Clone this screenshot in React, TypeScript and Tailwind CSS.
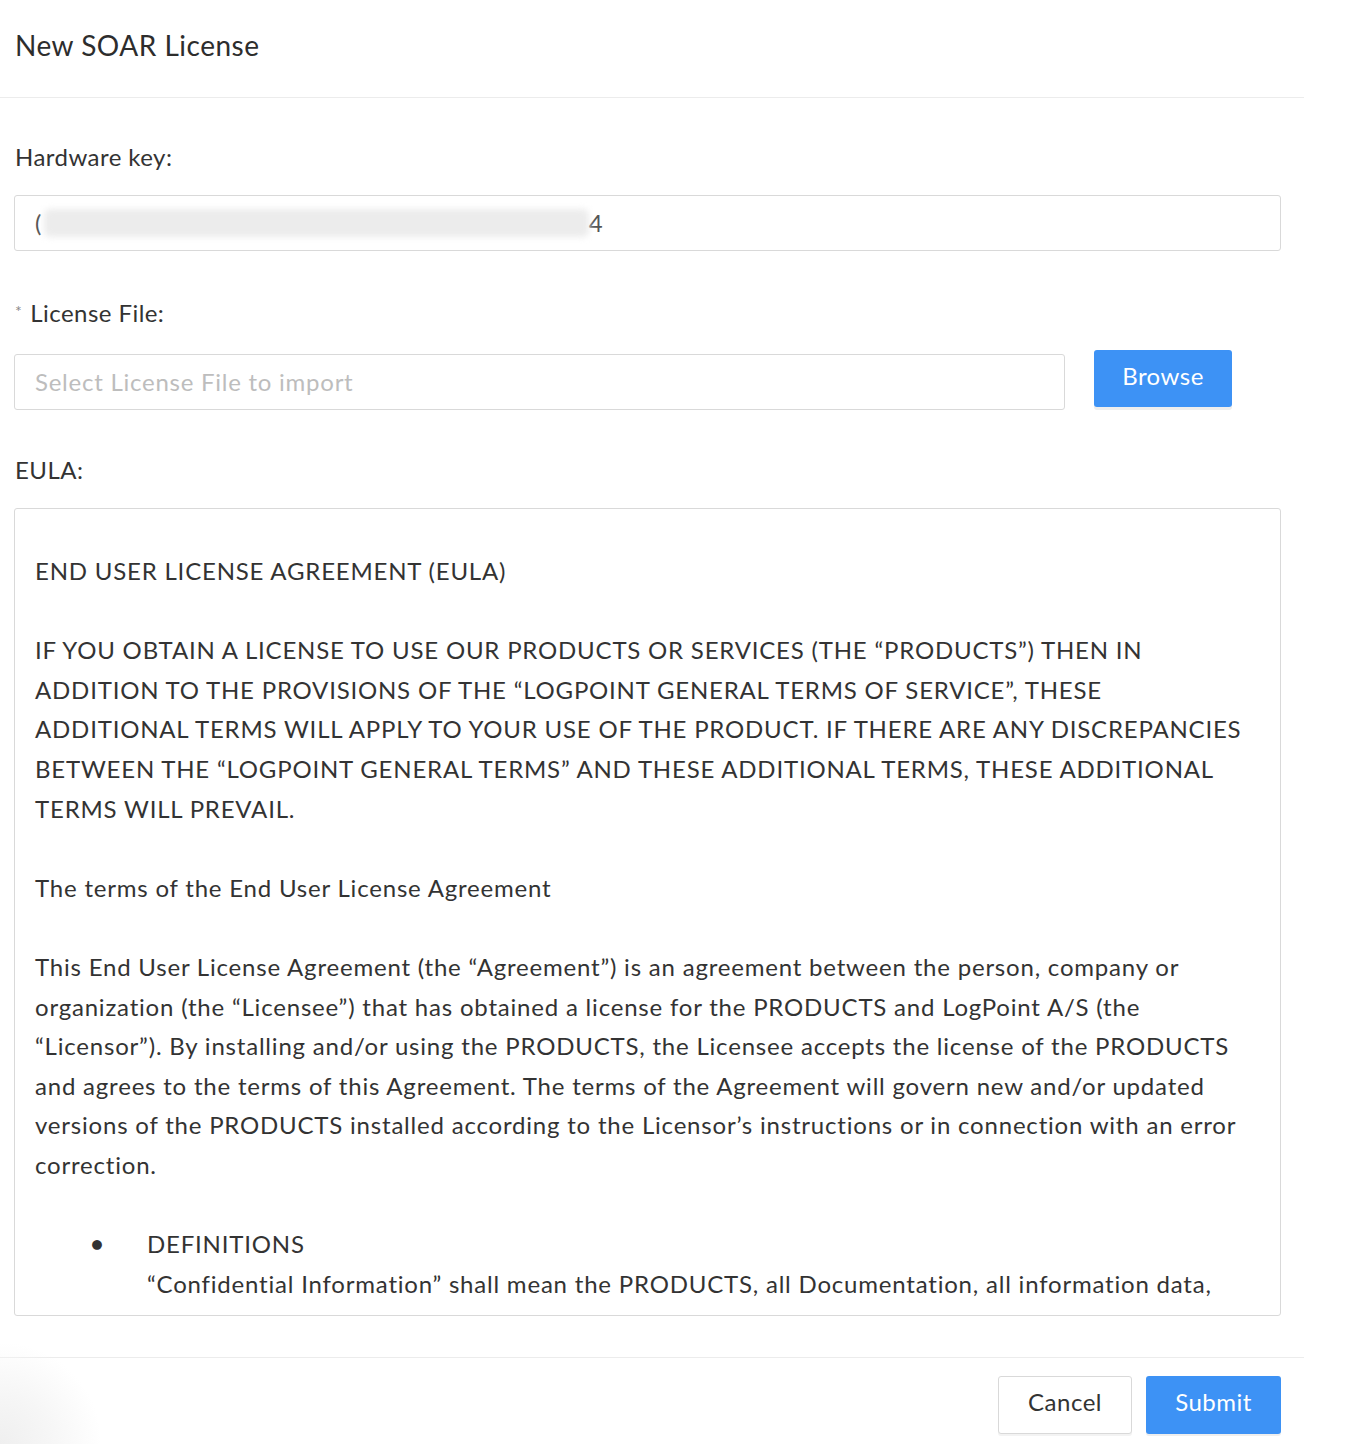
import React from "react";

const font = { fontFamily: "Lato, 'Open Sans', sans-serif" };

function Line({ children, className = "" }: { children: React.ReactNode; className?: string }) {
  return <div className={"whitespace-nowrap " + className}>{children}</div>;
}

export default function App() {
  return (
    <div className="relative w-[1356px] h-[1444px] bg-white text-[#333333] overflow-hidden" style={font}>
      <div className="w-[1304px] flex flex-col">
        {/* Header */}
        <div className="h-[98px] border-b border-[#ececec] px-[15px] pt-[26px]">
          <div className="text-[28px] leading-[38px] tracking-[0.5px] text-[#2d2d2d]">New SOAR License</div>
        </div>

        {/* Body */}
        <div className="pl-[14px] pr-[23px] flex flex-col text-[24px] tracking-[0.45px]">
          <div className="pt-[44px] pl-[1px] leading-[30px]">Hardware key:</div>
          <div className="mt-[23px] h-[56px] border border-[#d9d9d9] rounded-[3px] flex items-center pl-[20px]">
            <span className="text-[#555]">(</span>
            <span className="ml-[2px] h-[28px] w-[545px] bg-[#ececec] blur-[3px] rounded-[6px]"></span>
            <span className="text-[#555]">4</span>
          </div>

          <div className="mt-[47px] pl-[1px] flex items-center leading-[30px]">
            <span className="text-[16px] text-[#888] mr-[8px] mt-[-4px]">*</span>
            <span>License File:</span>
          </div>
          <div className="mt-[22px] flex items-start">
            <div className="mt-[4px] w-[1051px] h-[56px] border border-[#d9d9d9] rounded-[3px] flex items-center pl-[20px] text-[#bdbdbd] tracking-[0.75px]">
              Select License File to import
            </div>
            <button className="ml-[29px] w-[138px] h-[57px] rounded-[3px] bg-[#3d92f5] text-white tracking-[0.5px] shadow-[0_3px_0_#eeeeee] pb-[6px]">
              Browse
            </button>
          </div>

          <div className="mt-[45px] pl-[1px] leading-[30px]">EULA:</div>

          <div className="mt-[23px] h-[808px] border border-[#d9d9d9] rounded-[3px] overflow-hidden pl-[20px] pt-[42px] leading-[39.6px] tracking-[0.8px] text-[#333333]">
            <Line>END USER LICENSE AGREEMENT (EULA)</Line>
            <div className="h-[39.6px]" />
            <Line>IF YOU OBTAIN A LICENSE TO USE OUR PRODUCTS OR SERVICES (THE “PRODUCTS”) THEN IN</Line>
            <Line>ADDITION TO THE PROVISIONS OF THE “LOGPOINT GENERAL TERMS OF SERVICE”, THESE</Line>
            <Line>ADDITIONAL TERMS WILL APPLY TO YOUR USE OF THE PRODUCT. IF THERE ARE ANY DISCREPANCIES</Line>
            <Line>BETWEEN THE “LOGPOINT GENERAL TERMS” AND THESE ADDITIONAL TERMS, THESE ADDITIONAL</Line>
            <Line>TERMS WILL PREVAIL.</Line>
            <div className="h-[39.6px]" />
            <Line>The terms of the End User License Agreement</Line>
            <div className="h-[39.6px]" />
            <Line>This End User License Agreement (the “Agreement”) is an agreement between the person, company or</Line>
            <Line>organization (the “Licensee”) that has obtained a license for the PRODUCTS and LogPoint A/S (the</Line>
            <Line>“Licensor”). By installing and/or using the PRODUCTS, the Licensee accepts the license of the PRODUCTS</Line>
            <Line>and agrees to the terms of this Agreement. The terms of the Agreement will govern new and/or updated</Line>
            <Line>versions of the PRODUCTS installed according to the Licensor’s instructions or in connection with an error</Line>
            <Line>correction.</Line>
            <div className="h-[39.6px]" />
            <div className="flex items-center whitespace-nowrap">
              <span className="w-[112px] pl-[56px] text-[20px]">●</span>
              <span>DEFINITIONS</span>
            </div>
            <Line className="pl-[112px]">“Confidential Information” shall mean the PRODUCTS, all Documentation, all information data,</Line>
            <Line>the source code, program structures, know-how and the activities of LogPoint A/S and other proprietary info shall</Line>
          </div>
        </div>

        {/* Footer */}
        <div className="mt-[41px] border-t border-[#ececec] flex justify-end pr-[23px] pt-[18px] gap-[14px] text-[24px] tracking-[0.5px]">
          <button className="w-[134px] h-[58px] rounded-[3px] border border-[#d9d9d9] bg-white text-[#333333] pb-[6px] shadow-[0_2px_0_#f3f3f3]">
            Cancel
          </button>
          <button className="w-[135px] h-[58px] rounded-[3px] bg-[#3d92f5] text-white pb-[6px] shadow-[0_2px_0_#eeeeee]">
            Submit
          </button>
        </div>
      </div>
      <div className="absolute left-0 bottom-0 w-[100px] h-[100px] bg-[radial-gradient(circle_at_0%_100%,#efefef_0%,#f6f6f6_35%,rgba(255,255,255,0)_72%)]" />
    </div>
  );
}
